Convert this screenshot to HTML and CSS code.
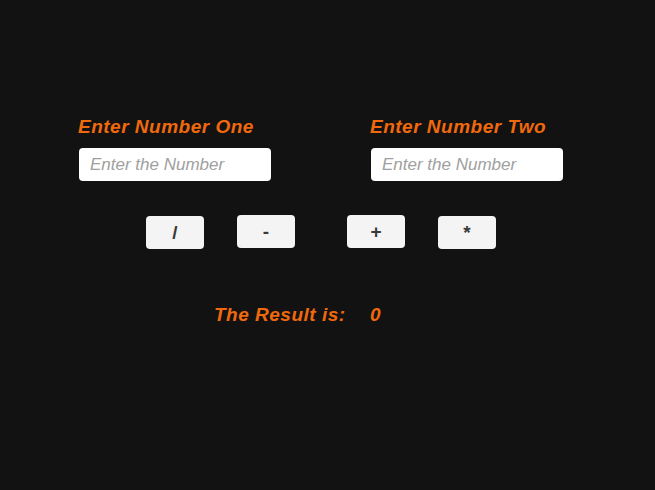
FILE: index.html
```html
<!DOCTYPE html>
<html>
<head>
<meta charset="utf-8">
<link rel="stylesheet" href="styles.css">
</head>
<body>
<div class="calc">
  <div class="inputs">
    <div class="field">
      <label class="label">Enter Number One</label>
      <input class="num" type="text" placeholder="Enter the Number">
    </div>
    <div class="field">
      <label class="label">Enter Number Two</label>
      <input class="num" type="text" placeholder="Enter the Number">
    </div>
  </div>
  <div class="ops">
    <button class="op">/</button>
    <button class="op op-up">-</button>
    <button class="op op-up op-far">+</button>
    <button class="op">*</button>
  </div>
  <div class="result">
    <span class="result-label">The Result is:</span>
    <span class="result-value">0</span>
  </div>
</div>
</body>
</html>
```
FILE: styles.css
```css
html, body {
  margin: 0;
  padding: 0;
  background: #121212;
  height: 100%;
}
body {
  font-family: "Liberation Sans", Arial, sans-serif;
}
.calc {
  padding-top: 116px;
}
.inputs {
  display: flex;
  padding-left: 78px;
}
.field {
  flex: 0 0 292px;
  width: 292px;
  display: flex;
  flex-direction: column;
  align-items: flex-start;
}
.label {
  color: #f0690c;
  font-weight: bold;
  font-style: italic;
  font-size: 19px;
  letter-spacing: 0.5px;
  line-height: 22px;
}
.num {
  box-sizing: border-box;
  margin: 10px 0 0 1px;
  width: 192px;
  height: 33px;
  border: none;
  border-radius: 4px;
  background: #ffffff;
  padding: 0 11px;
  font-family: "Liberation Sans", Arial, sans-serif;
  font-style: italic;
  font-size: 17px;
  outline: none;
}
.num::placeholder {
  color: #a0a0a0;
}
.ops {
  display: flex;
  align-items: flex-start;
  padding-left: 146px;
  margin-top: 35px;
  gap: 33px;
}
.op {
  box-sizing: border-box;
  width: 58px;
  height: 33px;
  border: none;
  border-radius: 4px;
  background: #f4f4f4;
  color: #3a3a3a;
  font-family: "Liberation Sans", Arial, sans-serif;
  font-weight: bold;
  font-size: 19px;
  padding: 0;
}
.op-up {
  margin-top: -1px;
}
.op-far {
  margin-left: 19px;
}
.result {
  display: flex;
  padding-left: 214px;
  margin-top: 55px;
  color: #f0690c;
  font-weight: bold;
  font-style: italic;
  font-size: 19px;
  letter-spacing: 0.5px;
  line-height: 22px;
}
.result-label {
  width: 156px;
}
```
